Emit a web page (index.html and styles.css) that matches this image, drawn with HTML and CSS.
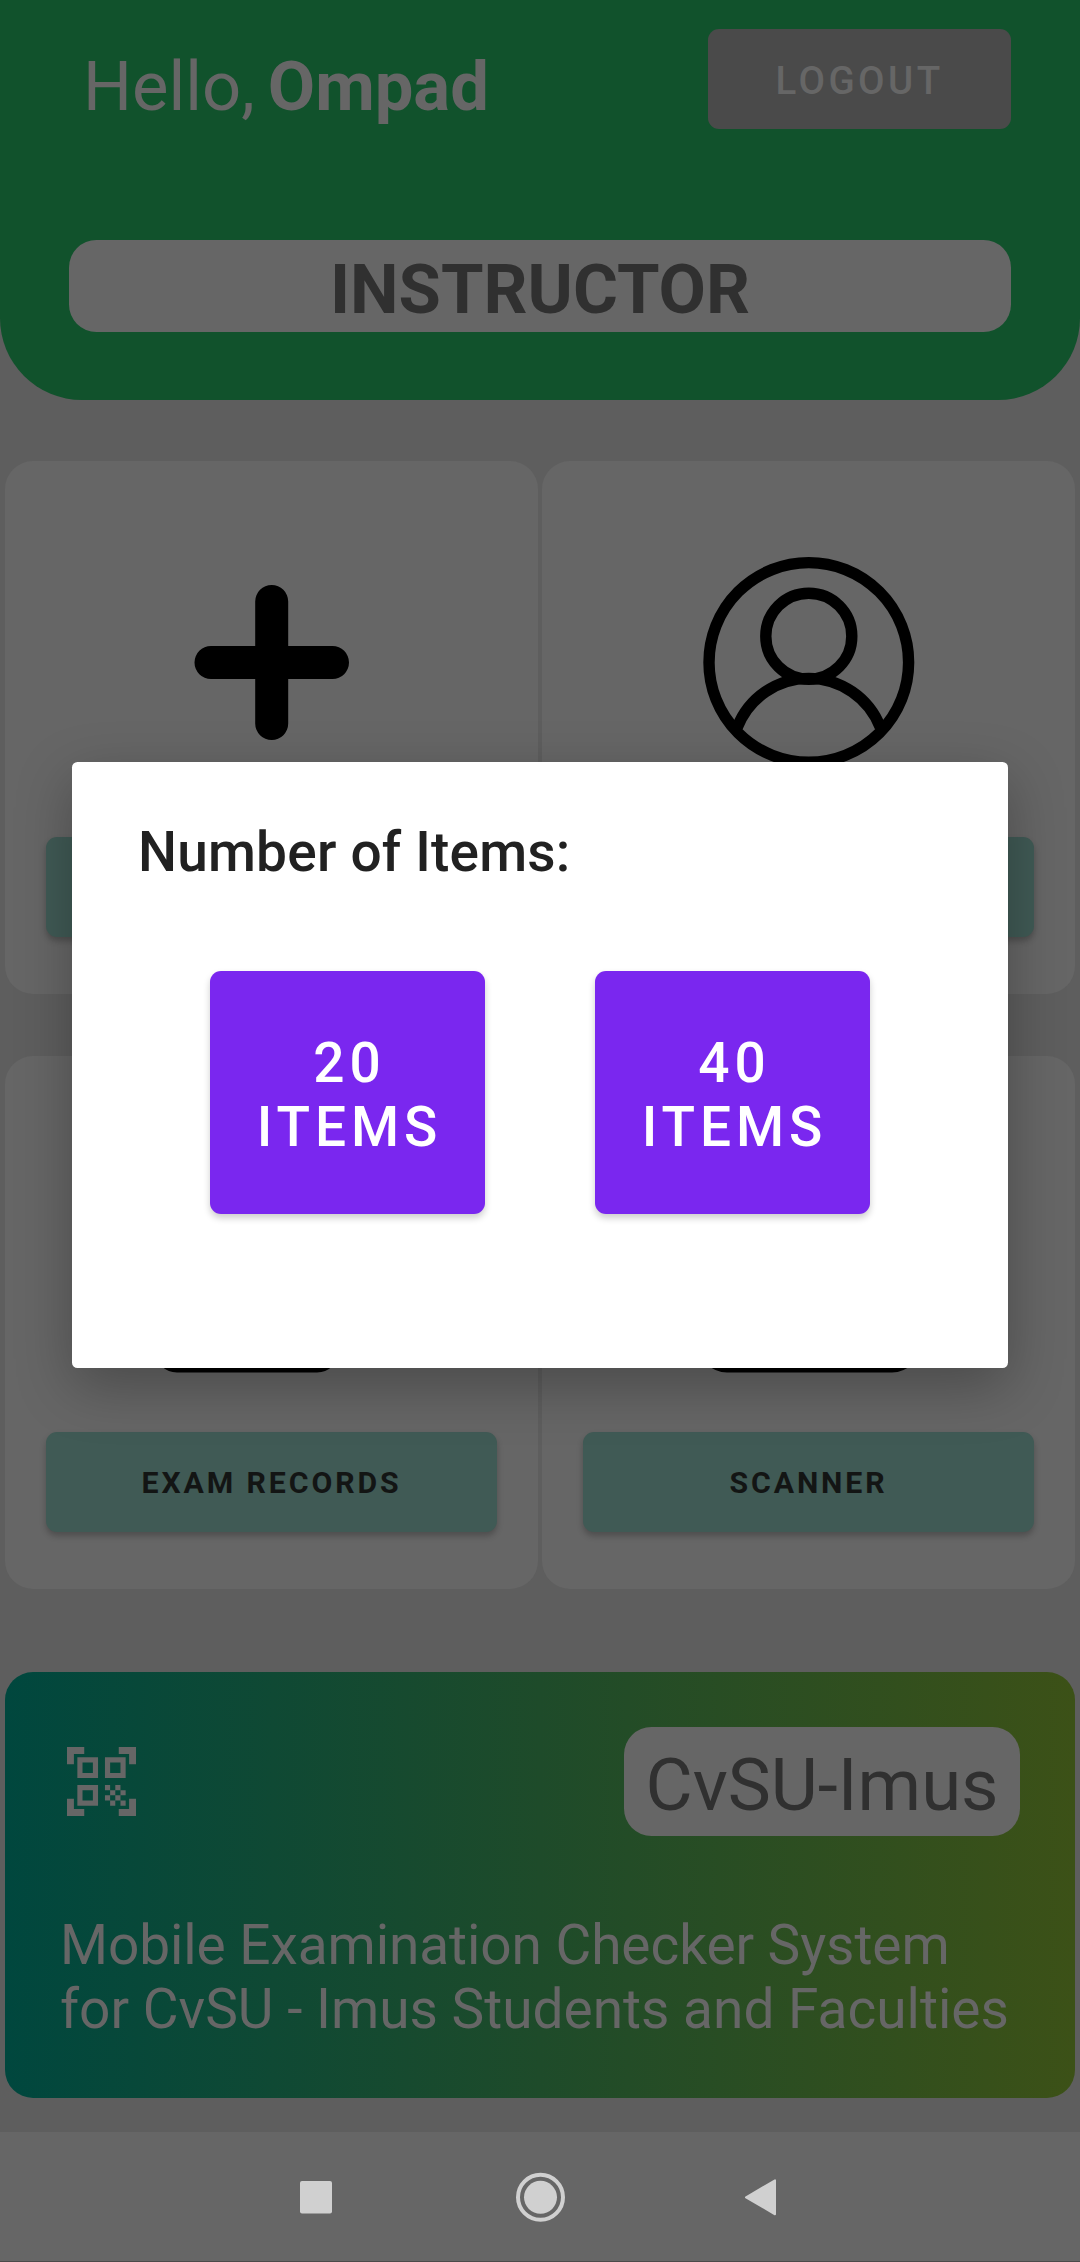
FILE: index.html
```html
<!DOCTYPE html>
<html lang="en">
<head>
<meta charset="utf-8">
<title>Instructor dashboard</title>
<link rel="stylesheet" href="styles.css">
</head>
<body>
<div class="screen">
  <header class="header">
    <div class="header-row">
      <p class="greeting">Hello, <strong class="greeting-name">Ompad</strong></p>
      <button class="logout">LOGOUT</button>
    </div>
    <div class="role">INSTRUCTOR</div>
  </header>

  <main class="tiles">
    <section class="tile">
      <svg class="tile-icon" viewBox="0 0 240 240">
        <path d="M119.700 59.500v122M59 120.500h121.500" fill="none" stroke="#000" stroke-width="33" stroke-linecap="round"/>
      </svg>
      <button class="tile-button" aria-label="Add"></button>
    </section>
    <section class="tile">
      <svg class="tile-icon" viewBox="0 0 240 240" fill="none" stroke="#000" stroke-width="11.4">
        <circle cx="119.800" cy="120.400" r="99.800"/>
        <circle cx="119.800" cy="94.200" r="43"/>
        <path d="M48.300 185.300a76.700 76.700 0 0 1 143 0"/>
      </svg>
      <button class="tile-button" aria-label="Profile"></button>
    </section>
    <section class="tile">
      <svg class="tile-icon" viewBox="0 0 240 240" fill="none" stroke="#000" stroke-width="12">
        <rect x="9" y="12" width="172" height="217.500" rx="16"/>
        <path d="M45 70h100M45 110h100M45 150h70"/>
      </svg>
      <button class="tile-button">EXAM RECORDS</button>
    </section>
    <section class="tile">
      <svg class="tile-icon" viewBox="0 0 240 240" fill="none" stroke="#000" stroke-width="12">
        <rect x="16" y="12" width="209" height="217.500" rx="22"/>
        <path d="M50 120h140"/>
      </svg>
      <button class="tile-button">SCANNER</button>
    </section>
  </main>

  <section class="banner">
    <div class="banner-top">
      <svg class="qr" viewBox="0 0 20 20" fill="#666">
        <path d="M0 0h5v2H2v3H0zM15 0h5v5h-2V2h-3zM0 15h2v3h3v2H0zM18 15h2v5h-5v-2h3z"/>
        <path fill-rule="evenodd" d="M3 3h6v6H3zM4.500 4.500v3h3v-3zM11 3h6v6h-6zM12.500 4.500v3h3v-3zM3 11h6v6H3zM4.500 12.500v3h3v-3z"/>
        <path d="M11 11h1.500v1.500H11zM14 11h1.500v1.500H14zM12.500 12.500H14V14h-1.500zM15.500 12.500H17V14h-1.500zM11 14h1.500v1.500H11zM14 14h1.500v1.500H14zM12.500 15.500H14V17h-1.500zM15.500 15.500H17V17h-1.500z"/>
      </svg>
      <span class="campus">CvSU-Imus</span>
    </div>
    <p class="banner-text"><span class="banner-lead">Mobile Examination Checker System</span><br>for CvSU - Imus Students and Faculties</p>
  </section>

  <nav class="navbar">
    <svg class="nav-icon" viewBox="0 0 50 50" fill="#d0d0d0"><rect x="9" y="9" width="32" height="32.500" rx="2"/></svg>
    <svg class="nav-icon" viewBox="0 0 50 50" fill="#d0d0d0"><circle cx="25.500" cy="25.300" r="16.500"/><circle cx="25.500" cy="25.300" r="22.500" fill="none" stroke="#d0d0d0" stroke-width="4"/></svg>
    <svg class="nav-icon" viewBox="0 0 50 50" fill="#d0d0d0" stroke="#d0d0d0" stroke-width="2" stroke-linejoin="round"><path d="M7 25.300 36 8.300v34z"/></svg>
  </nav>

  <div class="dialog" role="dialog" aria-labelledby="dialog-title">
    <h1 class="dialog-title" id="dialog-title">Number of Items:</h1>
    <div class="choices">
      <button class="choice">20<br>ITEMS</button>
      <button class="choice">40<br>ITEMS</button>
    </div>
  </div>
</div>
</body>
</html>
```
FILE: styles.css
```css
* {
  box-sizing: border-box;
}

body {
  margin: 0;
  font-family: Roboto, "Liberation Sans", sans-serif;
}

button {
  border: 0;
  padding: 0;
  font-family: inherit;
}

.screen {
  position: relative;
  display: flex;
  flex-direction: column;
  width: 1080px;
  height: 2262px;
  overflow: hidden;
  background: #5e5e5e;
}

.header {
  height: 400px;
  padding: 29px 69px 0 83px;
  background: #11522c;
  border-radius: 0 0 82px 82px;
}

.header-row {
  display: flex;
  justify-content: space-between;
  align-items: flex-start;
  height: 211px;
}

.greeting {
  margin: 18px 0 0;
  font-size: 68.75px;
  line-height: 80px;
  color: #666;
  white-space: nowrap;
  word-spacing: -4px;
}

.greeting-name {
  font-weight: 700;
}

.logout {
  width: 303px;
  height: 100px;
  padding-top: 2px;
  border-radius: 11px;
  background: #4a4a4a;
  color: #666;
  font-size: 38.5px;
  font-weight: 500;
  letter-spacing: 3.44px;
}

.role {
  height: 92px;
  margin-left: -14px;
  border-radius: 27.5px;
  background: #666;
  color: #303030;
  font-size: 68.75px;
  font-weight: 700;
  line-height: 100px;
  text-align: center;
}

.tiles {
  display: grid;
  grid-template-columns: 533px 533px;
  grid-auto-rows: 533px;
  gap: 62px 4px;
  padding: 61px 5px 0;
}

.tile {
  display: flex;
  flex-direction: column;
  align-items: center;
  justify-content: space-between;
  padding: 81px 41px 57px;
  border-radius: 28px;
  background: #666;
}

.tile-icon {
  width: 240px;
  height: 240px;
}

.tile-button {
  width: 451px;
  height: 100px;
  border-radius: 11px;
  background: #405a55;
  box-shadow: 0 4px 6px rgba(0, 0, 0, .24);
  color: #131514;
  font-size: 30.25px;
  font-weight: 700;
  letter-spacing: 2.9px;
}

.banner {
  height: 426px;
  margin: 83px 5px 0;
  padding: 55px 55px 0;
  border-radius: 28px;
  background: linear-gradient(90deg, #00473e, #1e4b2a 50%, #3c5117);
}

.banner-top {
  display: flex;
  justify-content: space-between;
  align-items: flex-start;
}

.qr {
  width: 69px;
  height: 69px;
  margin: 20px 0 0 7px;
}

.campus {
  width: 396px;
  height: 109px;
  border-radius: 27.5px;
  background: #666;
  color: #303030;
  font-size: 72.5px;
  line-height: 117px;
  text-align: center;
}

.banner-text {
  margin: 77px 0 0;
  color: #666;
  font-size: 55px;
  line-height: 64px;
  white-space: nowrap;
}

.banner-lead {
  letter-spacing: -.08px;
}

.navbar {
  display: flex;
  justify-content: center;
  gap: 174px;
  height: 130px;
  margin-top: auto;
  padding-top: 40px;
  border-bottom: 1px solid #4a4a4a;
  background: #666;
}

.nav-icon {
  width: 50px;
  height: 50px;
}

.dialog {
  position: absolute;
  top: 762px;
  left: 72px;
  width: 936px;
  height: 606px;
  padding: 58px 66px 0;
  border-radius: 5.5px;
  background: #fff;
  box-shadow: 0 18px 56px rgba(0, 0, 0, .28);
}

.dialog-title {
  margin: 0;
  color: #212121;
  font-size: 55px;
  font-weight: 500;
  line-height: 65px;
  letter-spacing: .2px;
}

.choices {
  display: flex;
  justify-content: center;
  gap: 110px;
  margin-top: 86px;
}

.choice {
  width: 275px;
  height: 243px;
  padding: 5px 0 0 4px;
  border-radius: 11px;
  background: #7a27ef;
  box-shadow: 0 4px 7px rgba(0, 0, 0, .2);
  color: #fff;
  font-size: 55px;
  font-weight: 500;
  line-height: 64px;
  letter-spacing: 4.91px;
}
```
